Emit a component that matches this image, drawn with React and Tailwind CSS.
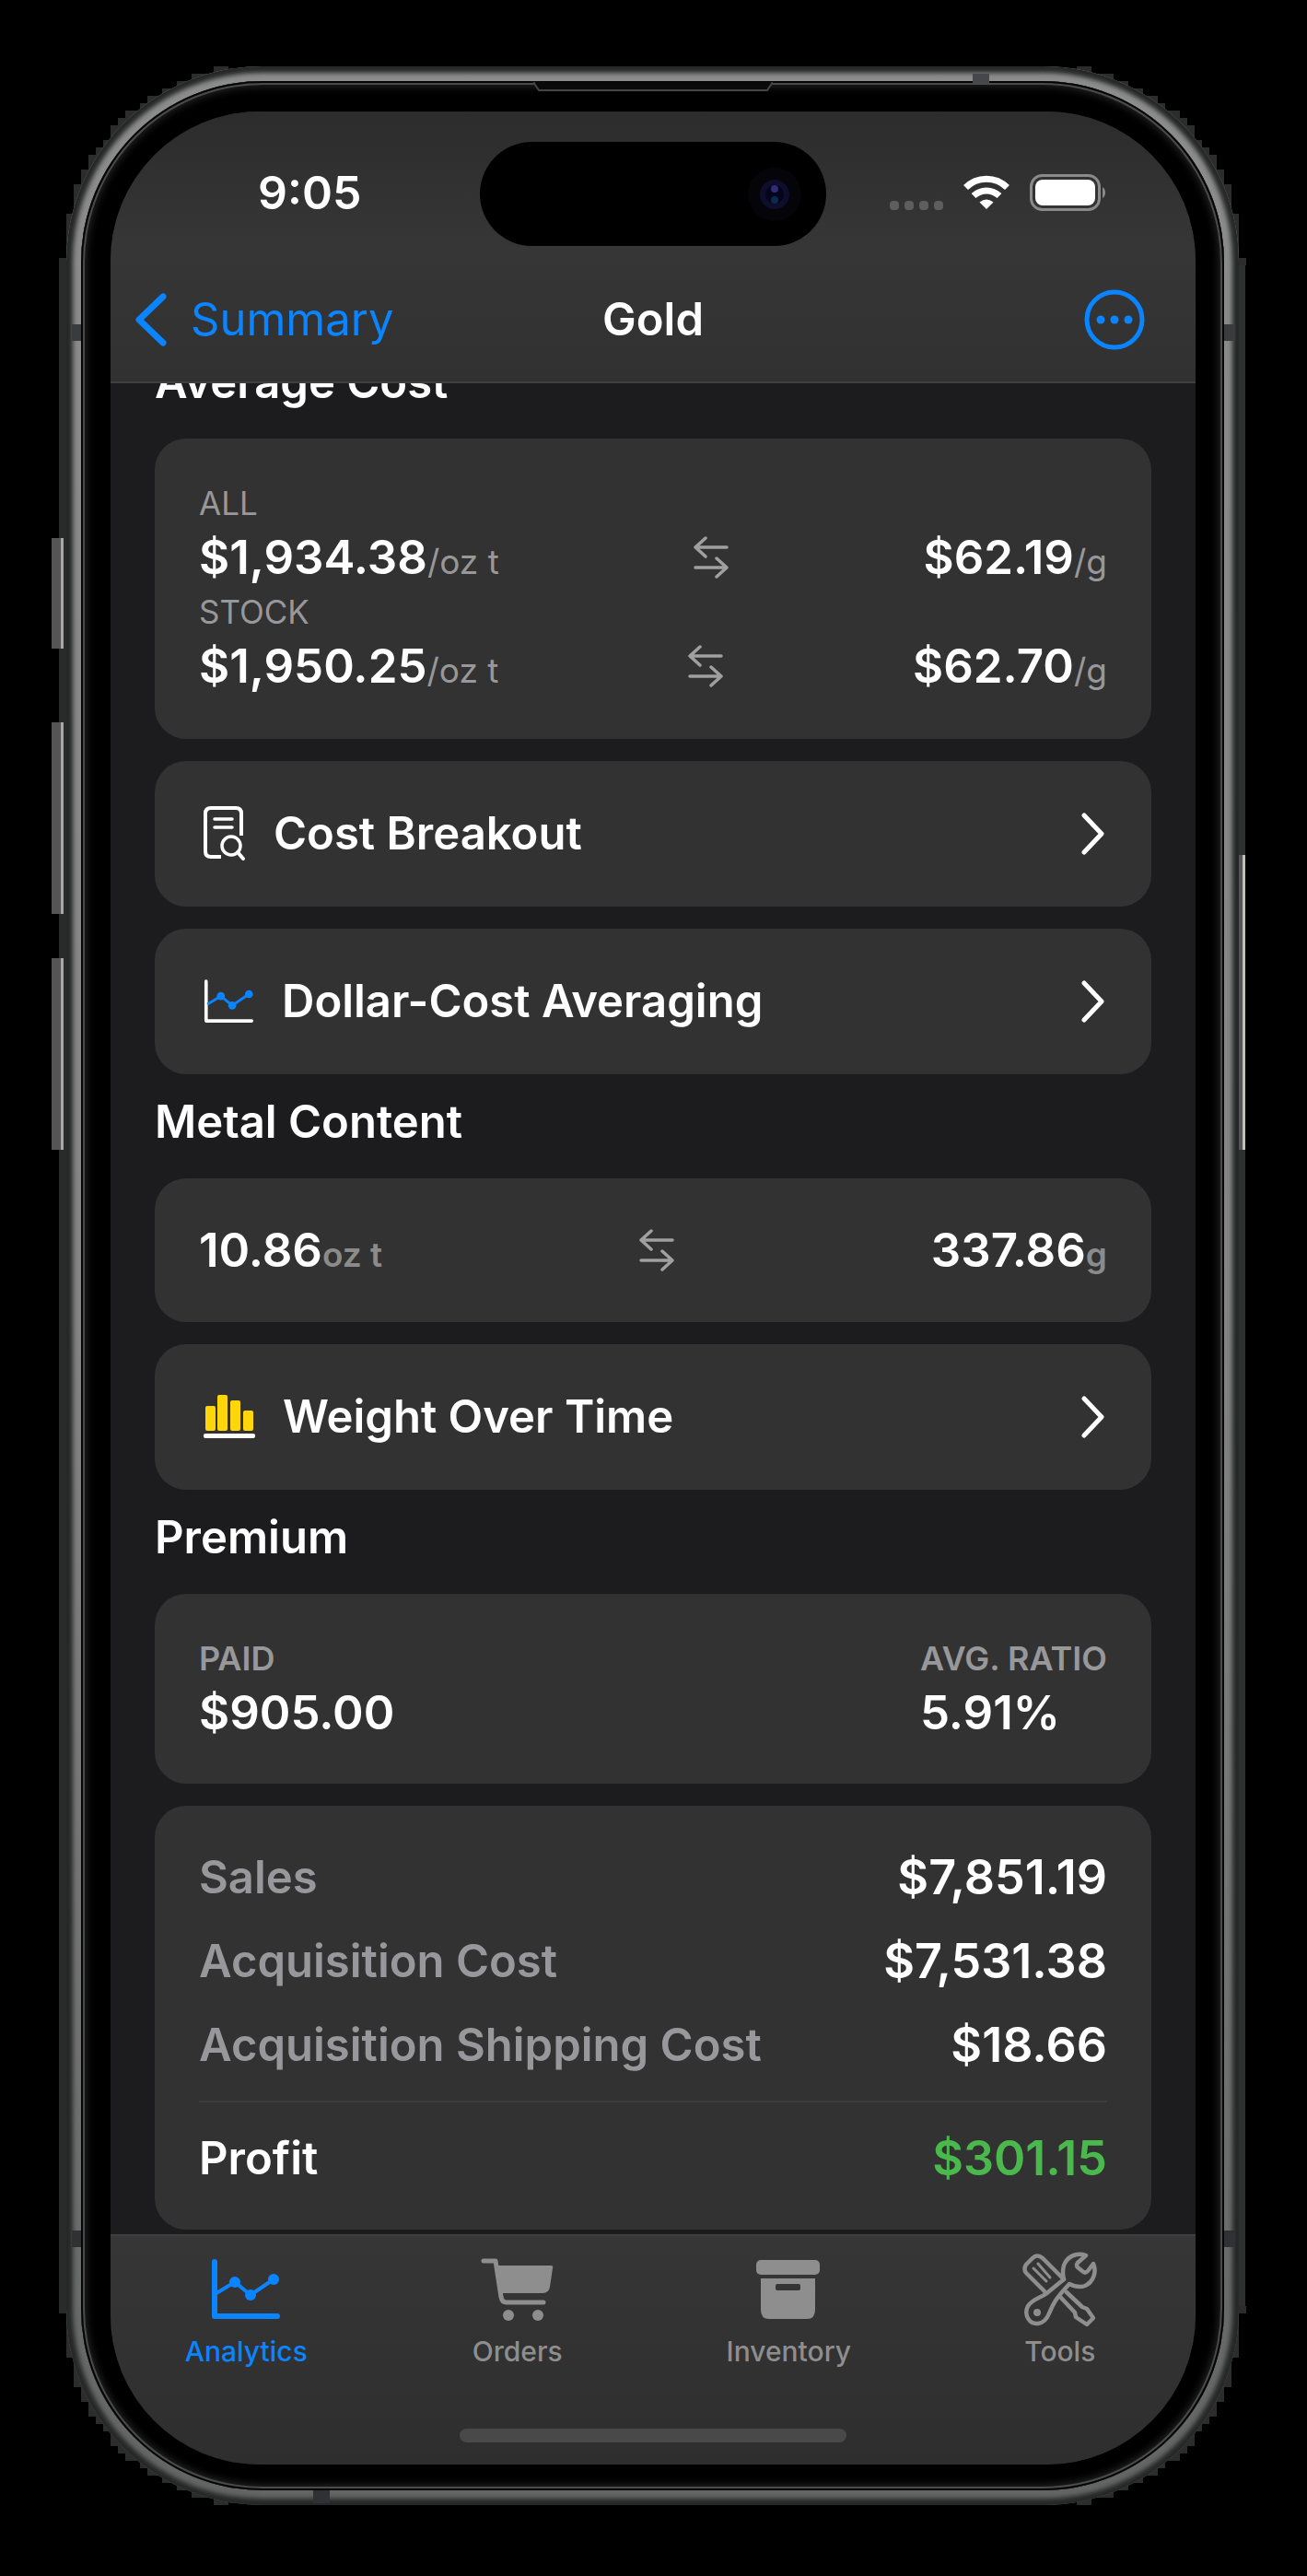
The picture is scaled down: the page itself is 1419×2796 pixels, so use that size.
const SEMI = "font-semibold";

function CornerSteps({ className }) {
  return (
    <svg
      aria-hidden="true"
      viewBox="0 0 184 216"
      shapeRendering="crispEdges"
      className={`absolute h-[216px] w-[184px] ${className}`}
    >
      <path
        d="M184 0H176V0H168V0V8H144V16H128V24H112V32H96V40H88V48H72V56H64V64H56V80H48V88H40V96H32V112H24V128H16V160H8V208H0V216H24L60 110L184 20Z"
        fill="#2b2c2b"
      />
    </svg>
  );
}

function SwapIcon() {
  return (
    <svg viewBox="0 0 38 46" className="h-[46px] w-[38px] text-[#a0a0a0]" fill="none" stroke="currentColor" strokeWidth="3.5" strokeLinecap="round" strokeLinejoin="round" aria-hidden="true">
      <path d="M36 12H2M13 2L2 12L13 22" />
      <path d="M2 34H36M25 24L36 34L25 44" />
    </svg>
  );
}

function ChevronRight() {
  return (
    <svg viewBox="0 0 26 46" className="h-[46px] w-[26px]" fill="none" stroke="white" strokeWidth="5" strokeLinecap="round" strokeLinejoin="round" aria-hidden="true">
      <path d="M3 3L22 23L3 43" />
    </svg>
  );
}

function DocSearchIcon() {
  return (
    <svg viewBox="0 0 46 60" className="h-[60px] w-[46px]" fill="none" stroke="white" strokeWidth="4" strokeLinecap="round" strokeLinejoin="round" aria-hidden="true">
      <path d="M19 55H8Q2 55 2 49V8Q2 2 8 2H35Q41 2 41 8V32" strokeLinecap="butt" />
      <path d="M12 14H31M12 23H31" strokeWidth="3.5" />
      <circle cx="30" cy="43" r="10" strokeWidth="3.5" />
      <path d="M37 50L43 57" />
    </svg>
  );
}

function LineChartIcon({ axis, line, className, weight = 5 }) {
  return (
    <svg viewBox="0 0 74 66" className={className} fill="none" strokeLinecap="round" strokeLinejoin="round" aria-hidden="true">
      <path d="M3 3V62H71" stroke={axis} strokeWidth={weight} />
      <path d="M5 37L25 25L42 39L67 22" stroke={line} strokeWidth="4" strokeLinecap="butt" />
      <g fill={line}>
        <circle cx="25" cy="25" r="6" />
        <circle cx="42" cy="39" r="6" />
        <circle cx="67" cy="22" r="6" />
      </g>
    </svg>
  );
}

function BarsIcon() {
  return (
    <svg viewBox="0 0 56 48" className="h-[48px] w-[56px]" aria-hidden="true">
      <g fill="#ffd60a">
        <rect x="2" y="12" width="11" height="27" rx="2" />
        <rect x="15" y="0" width="11" height="39" rx="2" />
        <rect x="29" y="6" width="11" height="33" rx="2" />
        <rect x="43" y="17" width="11" height="22" rx="2" />
      </g>
      <rect x="0" y="42" width="56" height="5" rx="2" fill="white" />
    </svg>
  );
}

function CartIcon() {
  return (
    <svg viewBox="0 0 80 68" className="h-[68px] w-[80px]" fill="none" strokeLinecap="round" strokeLinejoin="round" aria-hidden="true">
      <path d="M3 3H16L22 42Q23 48 28 48H68" stroke="currentColor" strokeWidth="5" />
      <path d="M17 8H76Q79 8 78 11L75 31Q74 38 67 38H22Z" fill="currentColor" />
      <circle cx="30" cy="62" r="6" fill="currentColor" />
      <circle cx="62" cy="62" r="6" fill="currentColor" />
    </svg>
  );
}

function ArchiveIcon() {
  return (
    <svg viewBox="0 0 70 64" className="h-[64px] w-[70px]" fill="currentColor" aria-hidden="true">
      <rect x="0" y="0" width="69" height="16" rx="5" />
      <path
        fillRule="evenodd"
        d="M5 20H64V54Q64 64 55 64H14Q5 64 5 54ZM23 26Q21 26 21 28V31Q21 33 23 33H46Q48 33 48 31V28Q48 26 46 26Z"
      />
    </svg>
  );
}

function ToolsIcon() {
  return (
    <svg viewBox="0 0 82 82" className="h-[82px] w-[82px]" fill="none" stroke="currentColor" strokeWidth="4.5" strokeLinejoin="round" strokeLinecap="round" aria-hidden="true">
      <path d="M25 44L4 23Q1 19 4 14L11 7Q16 2 22 7L45 30" />
      <path d="M12 18L26 32M17 13L30 28" strokeWidth="3" />
      <path d="M42 50L57 66L58 71L70 79L77 72L70 62L65 60L48 44" />
      <path d="M69 4C58 0 48 6 45 15Q43 23 45 30L29 43C22 50 12 50 6 59C1 69 8 79 17 78C24 77 27 72 29 67C33 57 36 51 51 35C57 38 63 39 68 37C77 33 81 22 77 13L71 21Q68 24 65 21L60 17Q58 15 60 12Z" />
      <circle cx="16" cy="66" r="3" fill="currentColor" strokeWidth="2" />
    </svg>
  );
}

function StatusBar() {
  return (
    <div className="flex items-center px-[98px] pt-[33px]">
      <div className="flex-1">
        <p className={`ml-[62px] pb-[4px] text-[50px] leading-[64px] ${SEMI}`}>9:05</p>
      </div>
      <div className="flex h-[113px] w-[376px] items-center justify-end rounded-full bg-black pr-[26px]">
        <svg viewBox="0 0 60 60" className="h-[60px] w-[60px]" aria-hidden="true">
          <circle cx="30" cy="30" r="29" fill="#050408" />
          <circle cx="30" cy="30" r="16" fill="#0e0d2c" />
          <circle cx="30" cy="30" r="10" fill="#04041a" />
          <circle cx="30" cy="24" r="4" fill="#2f2c78" />
          <circle cx="30" cy="36" r="4" fill="#0b2a4e" />
        </svg>
      </div>
      <div className="flex flex-1 items-center justify-end gap-[22px] pb-[4px]">
        <svg viewBox="0 0 58 40" className="h-[40px] w-[58px]" fill="#5e5e5e" aria-hidden="true">
          <rect x="0" y="29" width="10" height="10" rx="4" />
          <rect x="16" y="29" width="10" height="10" rx="4" />
          <rect x="32" y="29" width="10" height="10" rx="4" />
          <rect x="48" y="29" width="10" height="10" rx="4" />
        </svg>
        <svg viewBox="0 0 50 38" className="h-[38px] w-[50px]" fill="none" stroke="white" strokeWidth="7" aria-hidden="true">
          <path d="M2.500 13.500C15 1 35 1 47.500 13.500" />
          <path d="M11 22.500C19 15 31 15 39 22.500" />
          <path d="M25 37L17.500 29.500Q25 23.500 32.500 29.500Z" fill="white" stroke="none" />
        </svg>
        <svg viewBox="0 0 82 40" className="h-[40px] w-[82px]" aria-hidden="true">
          <rect x="1.500" y="1.500" width="74" height="37" rx="12" fill="none" stroke="#8a8a8a" strokeWidth="3" />
          <rect x="6" y="6" width="65" height="28" rx="8" fill="white" />
          <path d="M79 14Q82 16 82 20T79 26Z" fill="#8a8a8a" />
        </svg>
      </div>
    </div>
  );
}

function NavBar() {
  return (
    <nav className="flex items-center px-[27px] pt-[47px] pb-[34px]">
      <div className="flex flex-1">
        <button type="button" className="flex items-center gap-[26px] text-[49px] leading-[66px] text-[#0a84ff]">
          <svg viewBox="0 0 34 58" className="h-[58px] w-[34px]" fill="none" stroke="currentColor" strokeWidth="7" strokeLinecap="round" strokeLinejoin="round" aria-hidden="true">
            <path d="M30 4L4 29L30 54" />
          </svg>
          Summary
        </button>
      </div>
      <h1 className={`text-[49px] leading-[66px] ${SEMI}`}>Gold</h1>
      <div className="flex flex-1 justify-end">
        <button type="button" aria-label="More" className="mr-[28px] text-[#0a84ff]">
          <svg viewBox="0 0 66 66" className="h-[66px] w-[66px]" fill="none" aria-hidden="true">
            <circle cx="33" cy="33" r="30" stroke="currentColor" strokeWidth="5" />
            <g fill="currentColor">
              <circle cx="18" cy="33" r="4.5" />
              <circle cx="33" cy="33" r="4.5" />
              <circle cx="48" cy="33" r="4.5" />
            </g>
          </svg>
        </button>
      </div>
    </nav>
  );
}

function SectionTitle({ children }) {
  return <h2 className={`mb-[9px] text-[49px] leading-[56px] ${SEMI}`}>{children}</h2>;
}

function Amount({ value, unit, unitClass }) {
  return (
    <span className={`text-[51px] leading-[66px] whitespace-nowrap ${SEMI}`}>
      {value}
      <span className={`text-[37px] leading-none ${unitClass}`}>{unit}</span>
    </span>
  );
}

function Conversion({ left, leftUnit, right, rightUnit, unitClass = "font-normal text-[#98989a]" }) {
  return (
    <div className="flex items-center justify-between">
      <Amount value={left} unit={leftUnit} unitClass={unitClass} />
      <SwapIcon />
      <Amount value={right} unit={rightUnit} unitClass={unitClass} />
    </div>
  );
}

function LinkCard({ icon, label }) {
  return (
    <a href="#" className={`flex items-center rounded-[34px] bg-[#323232] py-[46px] pr-[50px] pl-[53px] text-[49px] leading-[66px] ${SEMI}`}>
      {icon}
      <span className="ml-[30px] flex-1">{label}</span>
      <ChevronRight />
    </a>
  );
}

const costs = [
  ["Sales", "$7,851.19"],
  ["Acquisition Cost", "$7,531.38"],
  ["Acquisition Shipping Cost", "$18.66"],
];

const tabs = [
  { label: "Analytics", active: true, icon: <LineChartIcon axis="currentColor" line="currentColor" weight={6} className="h-[66px] w-[74px]" /> },
  { label: "Orders", icon: <CartIcon /> },
  { label: "Inventory", icon: <ArchiveIcon /> },
  { label: "Tools", icon: <ToolsIcon /> },
];

export default function App() {
  return (
    <div className="min-h-screen bg-black pt-[72px] pr-[74px] pb-[76px] pl-[72px] font-['Inter',sans-serif] text-white">
      <div className="relative">
        <CornerSteps className="top-0 -left-[8px]" />
        <CornerSteps className="top-0 -right-[8px] -scale-x-100" />
        <CornerSteps className="bottom-0 -left-[8px] -scale-y-100" />
        <CornerSteps className="-right-[8px] bottom-0 -scale-100" />
        <div className="absolute top-[208px] bottom-[208px] -left-[8px] w-[24px] bg-[#292a2a]" />
        <div className="absolute top-[216px] -right-[7px] bottom-[216px] w-[24px] bg-[#2e2f2f]" />
        <div className="absolute top-[512px] -left-[16px] h-[120px] w-[13px] border-r-3 border-[#a8a8a8] bg-[#555]" />
        <div className="absolute top-[712px] -left-[16px] h-[208px] w-[13px] border-r-3 border-[#a8a8a8] bg-[#555]" />
        <div className="absolute top-[968px] -left-[16px] h-[208px] w-[13px] border-r-3 border-[#a8a8a8] bg-[#555]" />
        <div className="absolute top-[856px] -right-[7px] h-[320px] w-[7px] border-r-3 border-[#c0c0b8] bg-[#555]" />

        <div className="relative rounded-[212px] bg-linear-to-b from-[#8c8c8c] via-[#858585] to-[#636464] p-[16px] shadow-[inset_0_0_5px_7px_#262727]">
          <div className="rounded-[197px] bg-black pt-[33px] pr-[31px] pb-[28px] pl-[32px] shadow-[inset_0_0_0_2px_#050505,inset_0_0_0_4px_#4a4a4a,inset_0_0_8px_6px_#242424]">
            <div className="flex flex-col overflow-hidden rounded-[162px] bg-[#1c1c1e]">
              <header className="border-b-2 border-[#3e4040] bg-linear-to-b from-[#2c2c2c] via-[#353635] to-[#313131]">
                <StatusBar />
                <NavBar />
              </header>

              <main className="overflow-hidden px-[48px] pb-[5px]">
                <div className="-mt-[29px] flex flex-col gap-[24px]">
                  <SectionTitle>Average Cost</SectionTitle>
                  <section className="rounded-[34px] bg-[#323232] px-[48px] pt-[44px] pb-[46px]">
                    <div className="text-[35px] leading-[52px] text-[#98989a]">ALL</div>
                    <Conversion left="$1,934.38" leftUnit="/oz t" right="$62.19" rightUnit="/g" />
                    <div className="text-[35px] leading-[52px] text-[#98989a]">STOCK</div>
                    <Conversion left="$1,950.25" leftUnit="/oz t" right="$62.70" rightUnit="/g" />
                  </section>
                  <LinkCard icon={<DocSearchIcon />} label="Cost Breakout" />
                  <LinkCard icon={<LineChartIcon axis="white" line="#0a84ff" className="h-[48px] w-[55px]" />} label="Dollar-Cost Averaging" />

                  <SectionTitle>Metal Content</SectionTitle>
                  <section className="rounded-[34px] bg-[#323232] px-[48px] py-[45px]">
                    <Conversion left="10.86" leftUnit="oz t" right="337.86" rightUnit="g" unitClass="text-[#8b8b8c]" />
                  </section>
                  <LinkCard icon={<BarsIcon />} label="Weight Over Time" />

                  <SectionTitle>Premium</SectionTitle>
                  <section className={`flex justify-between rounded-[34px] bg-[#323232] px-[48px] py-[44px] ${SEMI}`}>
                    <div>
                      <div className="text-[36px] leading-[52px] text-[#98989a]">PAID</div>
                      <div className="text-[51px] leading-[66px]">$905.00</div>
                    </div>
                    <div>
                      <div className="text-[36px] leading-[52px] text-[#98989a]">AVG. RATIO</div>
                      <div className="text-[51px] leading-[66px]">5.91%</div>
                    </div>
                  </section>
                  <section className={`rounded-[34px] bg-[#323232] px-[48px] py-[32px] leading-[91px] ${SEMI}`}>
                    <dl>
                      {costs.map(([label, value]) => (
                        <div key={label} className="flex justify-between">
                          <dt className="text-[49px] text-[#98989c]">{label}</dt>
                          <dd className="text-[52px]">{value}</dd>
                        </div>
                      ))}
                      <div className="mt-[15px] flex justify-between border-t-2 border-[#3d3d3f] pt-[15px]">
                        <dt className="text-[49px]">Profit</dt>
                        <dd className="text-[52px] text-[#4bb84e]">$301.15</dd>
                      </div>
                    </dl>
                  </section>
                </div>
              </main>

              <footer className="border-t-2 border-[#3e4040] bg-linear-to-b from-[#363636] to-[#2e2e2e]">
                <nav className="grid grid-cols-4 pt-[13px]">
                  {tabs.map((tab) => (
                    <a
                      key={tab.label}
                      href="#"
                      className={`flex flex-col items-center text-[30px] leading-[44px] font-medium ${tab.active ? "text-[#0a84ff]" : "text-[#8e8e8e]"}`}
                    >
                      <span className="flex h-[90px] items-center">{tab.icon}</span>
                      {tab.label}
                    </a>
                  ))}
                </nav>
                <div className="mx-auto mt-[62px] mb-[24px] h-[15px] w-[420px] rounded-full bg-[#494949]" />
              </footer>
            </div>
          </div>

          <div className="absolute top-[8px] left-[984px] h-[10px] w-[18px] bg-[#45474a]" />
          <div className="absolute bottom-[2px] left-[268px] h-[14px] w-[18px] bg-[#303134]" />
          <div className="absolute top-[280px] left-[6px] h-[18px] w-[10px] bg-[#3a3b3d]" />
          <div className="absolute top-[280px] right-[4px] h-[18px] w-[12px] bg-[#3a3b3d]" />
          <div className="absolute bottom-[280px] left-[6px] h-[18px] w-[10px] bg-[#303134]" />
          <div className="absolute right-[4px] bottom-[280px] h-[18px] w-[12px] bg-[#303134]" />
          <svg viewBox="0 0 260 12" className="absolute top-[17px] left-1/2 h-[12px] w-[260px] -translate-x-1/2" fill="#0a0a0a" stroke="#454545" strokeWidth="2" aria-hidden="true">
            <path d="M0 0L6 9H254L260 0" />
          </svg>
        </div>
      </div>
    </div>
  );
}
